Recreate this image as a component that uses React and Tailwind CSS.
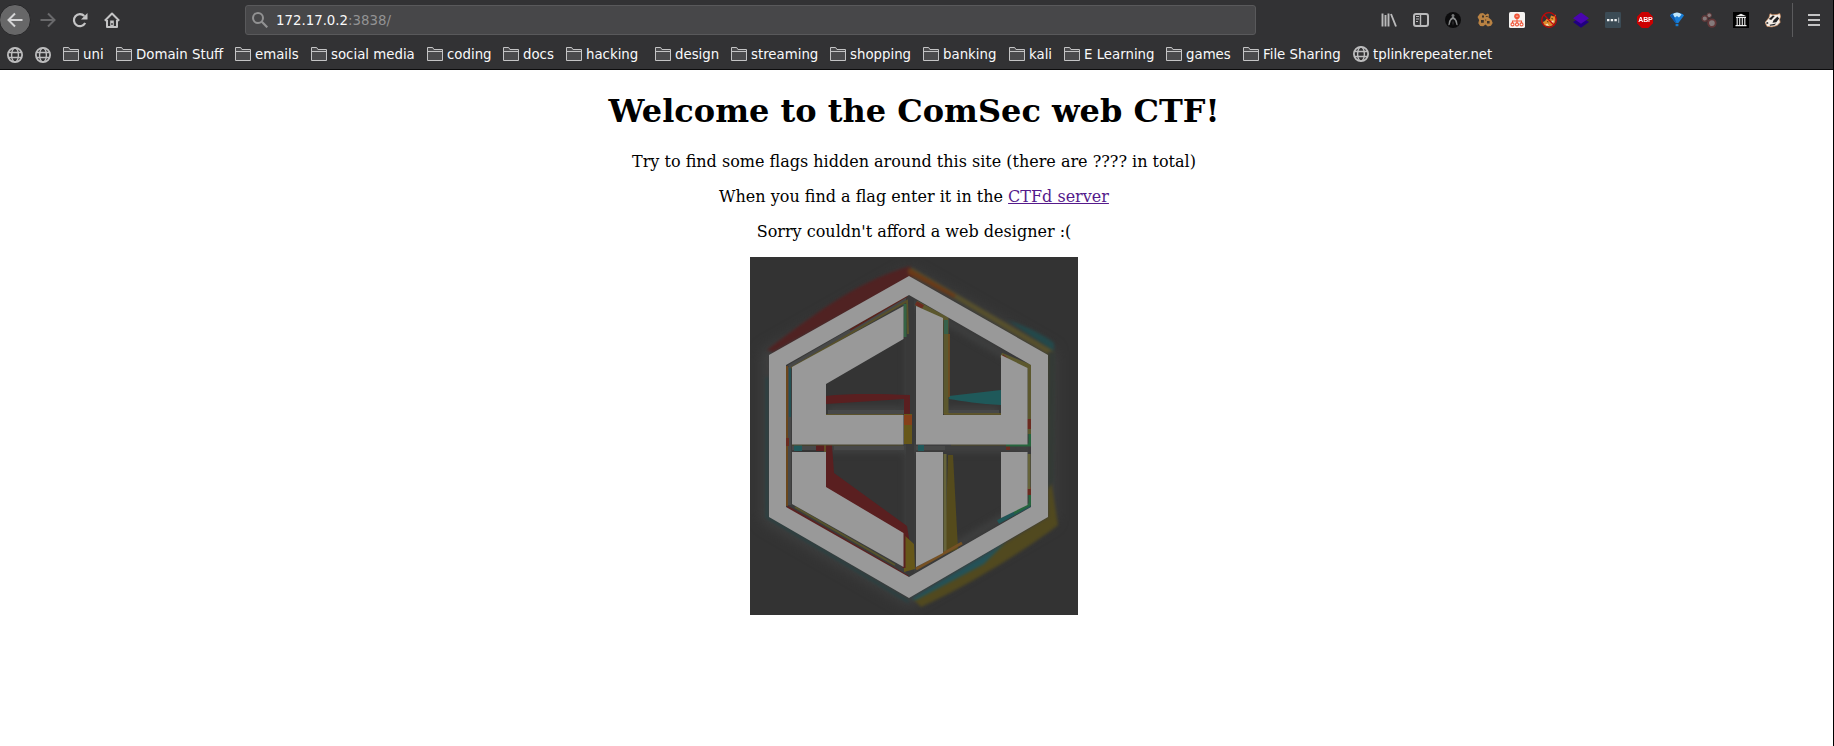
import React from 'react';

const folders = [
  ['uni', 'w-[53px]'],
  ['Domain Stuff', 'w-[119px]'],
  ['emails', 'w-[76px]'],
  ['social media', 'w-[116px]'],
  ['coding', 'w-[76px]'],
  ['docs', 'w-[63px]'],
  ['hacking', 'w-[89px]'],
  ['design', 'w-[76px]'],
  ['streaming', 'w-[99px]'],
  ['shopping', 'w-[93px]'],
  ['banking', 'w-[86px]'],
  ['kali', 'w-[55px]'],
  ['E Learning', 'w-[102px]'],
  ['games', 'w-[77px]'],
  ['File Sharing', 'w-[110px]'],
];

function Svg({ children, className = '' }) {
  return (
    <svg viewBox="0 0 16 16" className={`h-4 w-4 shrink-0 ${className}`} fill="none">
      {children}
    </svg>
  );
}

function Folder() {
  return (
    <Svg>
      <path d="M.5 14.5V1.5h5.2l1.2 2h8.6v11z" fill="#4b4b4d" stroke="#c4c4c5" />
      <path d="M1 5.5h14" stroke="#c4c4c5" />
    </Svg>
  );
}

function Globe() {
  return (
    <Svg>
      <circle cx="8" cy="8" r="7.1" stroke="#bdbdbe" strokeWidth="1.8" />
      <ellipse cx="8" cy="8" rx="3.4" ry="7" stroke="#bdbdbe" strokeWidth="1.4" />
      <path d="M1.5 5.5h13M1.5 10.5h13" stroke="#bdbdbe" strokeWidth="1.4" />
    </Svg>
  );
}

function Extensions() {
  return (
    <div className="flex gap-4">
      <Svg>
        <path d="M1.5 1.5v13M4.5 3v11.5M7.5 1.5v13M10 2l5 12.5" stroke="#bababb" strokeWidth="1.9" />
      </Svg>
      <Svg>
        <rect x="1" y="2" width="14" height="12" rx="2" stroke="#bababb" strokeWidth="2" />
        <path d="M7.5 2v12" stroke="#bababb" strokeWidth="1.4" />
        <path d="M3 4.5h3M3 7h3M3 9.5h2" stroke="#bababb" />
      </Svg>
      <Svg>
        <circle cx="8" cy="8" r="8" fill="#0c0c0d" />
        <circle cx="8" cy="3.5" r="1.5" fill="#77797a" />
        <path d="M8 4.5l2.5 2L12 9l.7 4.2-1.2-.3L10 8.5 8 7 6 8.5 4.5 12.9l-1.2.3L4 9l1.5-2.5z" fill="#8a8c8d" />
        <path d="M8 8l1.2 3-1.2 3-1.2-3z" fill="#262627" />
      </Svg>
      <Svg>
        <path d="M3 1.5l3-.5 2.5 2 2-1.5 1.5 1-.5 3 3 2.5 1.2 3-1.7 2.8-3.2.7-2.3-2-2.3 1.7-3-.2-1.9-2.8.8-3.2-1.6-3z" fill="#b98243" />
        <path d="M5 3.5h2v2H5zM4 8h2.8v2.8H4zM10 9h2.6v2.6H10z" fill="#3b332b" />
        <path d="M8.8 4.5h2M8 8h1.2" stroke="#53402a" />
      </Svg>
      <Svg>
        <rect width="16" height="16" rx="1.6" fill="#f5f3f1" />
        <circle cx="8" cy="4.2" r="2.8" fill="#f05437" />
        <path d="M8 6.5V12M3.5 12V9h9v3" stroke="#f05437" strokeWidth="1.1" />
        <path d="M6.8 4.2h2.4" stroke="#f9b5a6" />
        <circle cx="3.5" cy="12.4" r="1.5" fill="#fff" stroke="#f05437" strokeWidth="1.1" />
        <circle cx="8" cy="12.4" r="1.5" fill="#fff" stroke="#f05437" strokeWidth="1.1" />
        <circle cx="12.5" cy="12.4" r="1.5" fill="#fff" stroke="#f05437" strokeWidth="1.1" />
      </Svg>
      <Svg>
        <path d="M3 13.5L2 10l2-1 1.5-2L9 7l1-3.5 2.5 1L15 2.5 14.5 9l-2 4-4 1.5z" fill="#df8b2c" />
        <path d="M4 13l2.5-1.5L8 14zM10 9l3-.5-1.5 4z" fill="#f2e3c7" />
        <path d="M6 9.5l1.5.5M10.5 6.5l1.5.5" stroke="#593513" />
        <circle cx="8" cy="8" r="7.3" stroke="#c30808" strokeWidth="1.3" />
        <path d="M2.8 2.8l10.4 10.4" stroke="#c30808" strokeWidth="1.3" />
      </Svg>
      <Svg>
        <path d="M0 10l8-5 8 5-8 5.8z" fill="#200080" />
        <path d="M0 6.2L8 .5l8 5.7-8 5.6z" fill="#4a05b0" />
      </Svg>
      <Svg>
        <rect width="16" height="16" rx="1.2" fill="#3b4b55" />
        <path d="M2 7h2.4v2.3H2zM5.7 7h2.4v2.3H5.7zM9.4 7h2.4v2.3H9.4z" fill="#f2f4f5" />
        <path d="M13.7 5.5v5.3" stroke="#a4adb3" strokeWidth="1" />
      </Svg>
      <div className="flex h-4 w-4 items-center justify-center bg-[#cb0000] font-['Liberation_Sans'] text-[8px] leading-4 font-bold text-white [clip-path:polygon(30%_0,70%_0,100%_30%,100%_70%,70%_100%,30%_100%,0_70%,0_30%)]">
        <span className="scale-x-[0.86]">ABP</span>
      </div>
      <Svg>
        <path d="M1 3.5C3-.3 13-.3 15 3.5L9.4 11H6.6z" fill="#197dd5" />
        <path d="M3.5 2.5C6-.2 10-.2 12.5 2.5L10 5.5 8 4 6 5.5z" fill="#bfe6fb" />
        <path d="M1 3.5L4 2l3.5 9h-1z" fill="#0c59ad" />
        <path d="M6.6 11.8h2.8v2.4H6.6z" fill="#167ad0" />
      </Svg>
      <Svg>
        <circle cx="8.2" cy="3.3" r="2.3" fill="#887b7c" stroke="#5b3738" />
        <circle cx="3.8" cy="6.5" r="2.8" fill="#857a7b" stroke="#5b3738" strokeWidth="1.4" />
        <circle cx="10.9" cy="11.1" r="3.8" fill="#857a7b" stroke="#633738" strokeWidth="1.8" />
      </Svg>
      <Svg>
        <path d="M0 0h16v16H0z" fill="#000" />
        <path d="M2.5 4.2L8 1.8l5.5 2.4zM3 5h10v1H3zM2.5 13h11v1.3h-11z" fill="#eee" />
        <path d="M4.2 6v7M6.7 6v7M9.3 6v7M11.8 6v7" stroke="#ddd" strokeWidth="1.2" />
      </Svg>
      <Svg>
        <path d="M0 10.5l4-5L5 1.7l2.5 1 4.5-.2 2.8-1 .8 3-1 3 .6 2.8-3 3.2-5.2 1.4L2 14.4z" fill="#f4eee8" stroke="#c58353" strokeWidth=".7" />
        <path d="M3.8 7l4-3.4 2 .3-3.6 4.2zM8.5 8.2l4-3.6 1.6 2-2.8 3.6-3.8.6zM1 10.8l2-.8.4 1.4-1.6.6zM4.5 12.7l6.8-1.2-2 1.7-4.2.6z" fill="#222224" />
      </Svg>
    </div>
  );
}

function Logo() {
  return (
    <svg viewBox="0 0 328 358" className="block h-[358px] w-[328px]">
      <defs>
        <filter id="halo" x="-20%" y="-20%" width="140%" height="140%" colorInterpolationFilters="sRGB">
          <feGaussianBlur stdDeviation="7" />
        </filter>
        <filter id="glow" colorInterpolationFilters="sRGB">
          <feGaussianBlur stdDeviation="3.5" />
        </filter>
        <filter id="soft" colorInterpolationFilters="sRGB">
          <feGaussianBlur stdDeviation="1.5" />
        </filter>
        <filter id="edge" colorInterpolationFilters="sRGB">
          <feGaussianBlur stdDeviation="0.65" />
        </filter>
        <clipPath id="frame">
          <path d="M0 0h328v358H0z" />
        </clipPath>
      </defs>
      <path d="M0 0h328v358H0z" fill="#333333" />
      <g clipPath="url(#frame)">
        <path d="M159 19L298 98V260L159 341L19 260V98Z" fill="none" stroke="#424343" strokeWidth="12" filter="url(#halo)" />
        <path d="M159 38L281 108V250L159 320L36 250V108Z" fill="#343434" />
        <g fill="none" stroke="#424343" filter="url(#glow)">
          <path d="M159 42L277 111V247L159 316L40 247V111Z" strokeWidth="6" />
          <path d="M160 42V316M76 191H277M78 154H153M196 154H249" strokeWidth="8" />
        </g>
        <g fill="none" stroke="#474848" filter="url(#edge)">
          <path d="M39 110L158 41M39 110V248M157 155H78M196 155H249M42 191H66M84 191H154M166 191H195" strokeWidth="4" />
        </g>
        <path d="M160 38V320" stroke="#393939" strokeWidth="8" />
        <g filter="url(#soft)">
          <path d="M17 93C50 68 105 24 160 9L164 19L23 95Z" fill="#502222" />
          <path d="M157 13L162 11L302 93L299 98Z" fill="#57502c" />
          <path d="M159 11L206 38L204 41L158 17Z" fill="#6a3a18" />
          <path d="M257 63C275 69 292 77 304 86V94Z" fill="#23494b" />
          <path d="M297 96L304 94L302 230L308 268C280 290 220 328 171 350L163 342L298 260Z" fill="#51491f" />
          <path d="M298 95H305L304 224L298 232Z" fill="#343a36" />
          <path d="M161 342L256 285L234 307L166 343Z" fill="#245258" />
          <path d="M17 120V260L159 345" fill="none" stroke="#2a4142" strokeWidth="3" />
        </g>
        <g filter="url(#edge)">
          <path d="M76 139C100 136 135 137 160 138V164H154V142L76 147Z" fill="#5a1f20" />
          <path d="M199 139L251 133V148C230 147 212 144 199 142Z" fill="#1f595a" />
          <path d="M66 188H82L84 216L157 269L160 287L152 278L76 231V194H66Z" fill="#5a1f20" />
          <path d="M198 198H203L208 292L195 297Z" fill="#554b1c" />
          <path d="M154 157H162V187H154ZM154 278L164 287L165 312L154 315Z" fill="#665719" />
          <path d="M154 158H162V168H154Z" fill="#854019" />
        </g>
        <g fill="none" filter="url(#edge)">
          <path d="M100 73L157 39" stroke="#5a221b" strokeWidth="2" />
          <path d="M41 111L157 44L158 77" stroke="#58512a" strokeWidth="2" />
          <path d="M155 47V80" stroke="#356444" strokeWidth="3" />
          <path d="M37 109V249" stroke="#6b471c" strokeWidth="2" />
          <path d="M40 111V160" stroke="#245255" strokeWidth="2" />
          <path d="M166 46L196 62V157M251 98L280 110V177" stroke="#5c582e" strokeWidth="5" />
          <path d="M196 63V77" stroke="#36614b" strokeWidth="4" />
          <path d="M199 77V140" stroke="#79501d" strokeWidth="1.5" />
          <path d="M166 46L173 50M252 99L257 103M37 181V189M256 191H260M279 162V172M279 230V238" stroke="#6b2b20" strokeWidth="4" />
          <path d="M75 128V158H153M194 157H251M75 188V230" stroke="#675b27" strokeWidth="1.5" />
          <path d="M37 250L158 320M154 277V311" stroke="#5a2120" strokeWidth="3" />
          <path d="M45 250L145 308" stroke="#57542b" strokeWidth="2" />
          <path d="M195 197V296M279 197V232" stroke="#66643a" strokeWidth="3" />
          <path d="M166 312L212 286" stroke="#765124" strokeWidth="3" />
          <path d="M248 265L280 248" stroke="#205657" strokeWidth="4" />
          <path d="M264 256L280 247V238M280 177V188H256" stroke="#26653d" strokeWidth="3" />
          <path d="M44 191H52M168 191H174" stroke="#20595b" strokeWidth="6" />
          <path d="M42 188H153M201 188H256" stroke="#575128" />
        </g>
        <g fill="#999999" filter="url(#edge)">
          <path fillRule="evenodd" d="M159 19L298 98V260L159 341L19 260V98ZM159 38L36 108V250L159 320L281 250V108Z" />
          <path d="M42 110L153.5 49V82L76 127V158H153.5V187.5H42Z" />
          <path d="M42 195H76V230L153.5 276V310L42 247Z" />
          <path d="M166 49L193 61V158H251V98L277.5 111V187.5H166Z" />
          <path d="M166 195H193V296L166 310Z" />
          <path d="M251 195H277.5V248L251 261Z" />
        </g>
      </g>
    </svg>
  );
}

export default function App() {
  return (
    <div className="flex h-[746px] w-[1834px] flex-col overflow-hidden border-r border-black bg-white">
      <header className="flex h-[70px] shrink-0 flex-col border-b border-[#0c0c0d] bg-[#323234] font-['DejaVu_Sans',sans-serif] text-[13.33px]">
        <div className="flex h-10 items-center">
          <div className="-ml-px flex h-8 w-8 shrink-0 items-center justify-center rounded-full border border-[#262628] bg-[#676768]">
            <Svg>
              <path d="M15.5 8H1.8M8 1.5L1.5 8L8 14.5" stroke="#d5d5d6" strokeWidth="2" />
            </Svg>
          </div>
          <Svg className="ml-[9px]">
            <path d="M.5 8h13.7M8 1.5L14.5 8L8 14.5" stroke="#69696b" strokeWidth="2" />
          </Svg>
          <Svg className="ml-4">
            <path d="M13.2 11A6 6 0 1 1 12.3 4" stroke="#c4c4c5" strokeWidth="2.2" />
            <path d="M15.5 1v6.5H9z" fill="#c4c4c5" />
          </Svg>
          <Svg className="ml-4">
            <path d="M.8 8.7L8 1.5l7.2 7.2M3 8v7h10V8" stroke="#c4c4c5" strokeWidth="2" strokeLinejoin="round" />
            <path d="M6.2 15V8.5h3.6V15" fill="#c4c4c5" />
            <path d="M8 11v2" stroke="#323234" strokeWidth="1.3" />
          </Svg>
          <div className="ml-[125px] flex h-[30px] w-[1011px] shrink-0 items-center rounded-[3px] border border-[#59595b] bg-[#474749] pl-1.5">
            <Svg>
              <circle cx="6" cy="6" r="5" stroke="#929293" strokeWidth="2" />
              <path d="M9.8 9.8l5.5 5.5" stroke="#929293" strokeWidth="2.2" />
            </Svg>
            <span className="ml-2 pt-0.5 whitespace-pre text-[#f9f9fa]">
              172.17.0.2<span className="text-[#939394]">:3838/</span>
            </span>
          </div>
          <div className="ml-[125px]">
            <Extensions />
          </div>
          <div className="ml-[11px] h-[34px] w-px bg-[#5b5b5d]" />
          <Svg className="ml-[13px]">
            <path d="M2 3h12M2 8h12M2 13h12" stroke="#c4c4c5" strokeWidth="2" />
          </Svg>
        </div>
        <nav className="flex h-[29px] items-center pl-[7px] text-[#f9f9fa]">
          <div className="flex w-14 gap-3">
            <Globe />
            <Globe />
          </div>
          {folders.map(([name, width]) => (
            <div key={name} className={`flex shrink-0 items-center gap-1 whitespace-nowrap ${width}`}>
              <Folder />
              <span>{name}</span>
            </div>
          ))}
          <div className="flex items-center gap-1">
            <Globe />
            <span>tplinkrepeater.net</span>
          </div>
        </nav>
      </header>
      <main className="flex grow flex-col items-center gap-4 pt-[23px] pr-[5px] font-['DejaVu_Serif',serif] text-base leading-[19px] text-black">
        <h1 className="mb-[6px] text-[32px] leading-[37px] font-bold">Welcome to the ComSec web CTF!</h1>
        <p>Try to find some flags hidden around this site (there are ???? in total)</p>
        <p>
          When you find a flag enter it in the <a href="#" className="text-[#551a8b] underline">CTFd server</a>
        </p>
        <p>Sorry couldn't afford a web designer :(</p>
        <Logo />
      </main>
    </div>
  );
}
